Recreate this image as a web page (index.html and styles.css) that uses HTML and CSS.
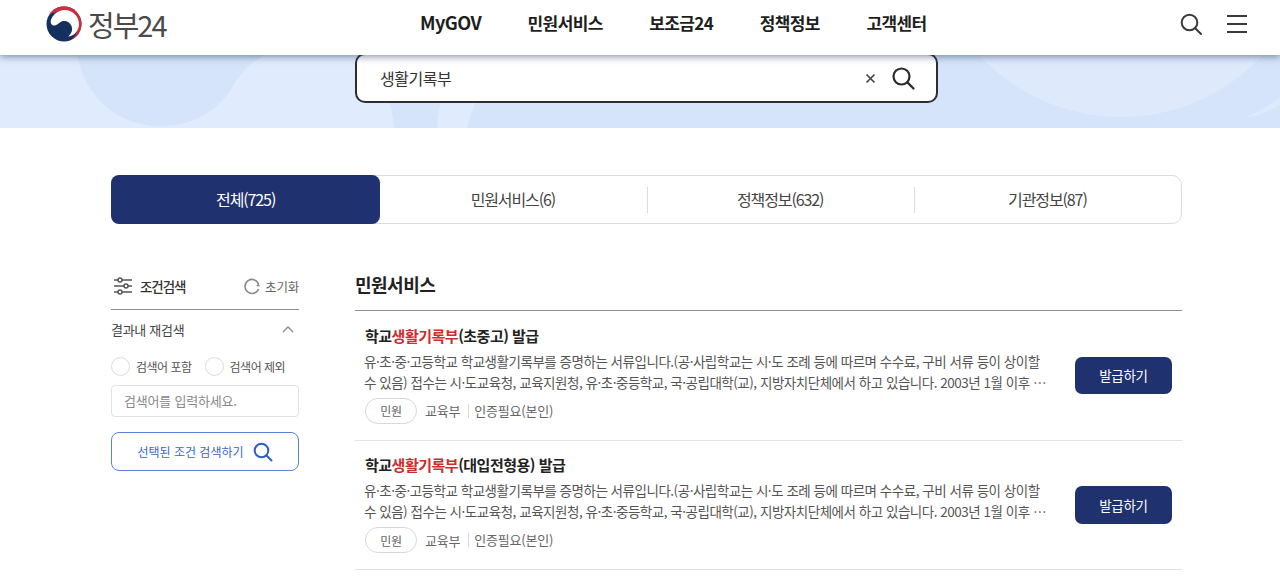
FILE: index.html
```html
<!DOCTYPE html>
<html lang="ko">
<head>
<meta charset="utf-8">
<title>정부24 검색</title>
<link rel="stylesheet" href="styles.css">
</head>
<body>
<header class="top">
  <a class="logo">
    <svg class="mark" width="36" height="36" viewBox="0 0 36 36">
      <circle cx="18" cy="18" r="17.500" fill="#14305f"/>
      <path d="M3.500 8C7 3 12 .5 18 .5 27.700.5 35.500 8.300 35.500 18c0 7-4 13-10 15.800 3.500-3.300 6.500-8.300 6.500-14.300C32 12 26 5 18.500 5 13 5 7.500 7.500 3.500 8z" fill="#c9303c"/>
      <path d="M4.700 15C6 9 12 4 18.500 4 27 4 33.200 11 33 18.500 32.800 25 27.500 30.500 22 30.500c3.500-2.500 5-6.700 3.500-10.500-1.500-3.800-6-6-10-4.500-2.500 1-3.500 3-6 3.700C7 20.300 4.200 18 4.700 15z" fill="#fff"/>
    </svg>
    <span class="logo-text">정부24</span>
  </a>
  <nav class="gnb">
    <a class="gnb-en">MyGOV</a>
    <a>민원서비스</a>
    <a>보조금24</a>
    <a>정책정보</a>
    <a>고객센터</a>
  </nav>
  <div class="top-tools">
    <svg width="24" height="24" viewBox="0 0 24 24" fill="none" stroke="#3a3a3a" stroke-width="2"><circle cx="10.500" cy="10.500" r="7.800"/><path d="M16.200 16.200L22 22" stroke-linecap="round"/></svg>
    <svg width="20" height="18" viewBox="0 0 20 18" fill="none" stroke="#3a3a3a" stroke-width="2"><path d="M0 1h20M0 9h20M0 17h20"/></svg>
  </div>
</header>

<section class="hero">
  <svg class="hero-bg" width="1280" height="73" viewBox="0 0 1280 73">
    <rect width="1280" height="73" fill="#e0ecfd"/>
    <path d="M77 0C85 40 115 71 160 71 195 71 218 55 232 33 240 18 252 6 265 0z" fill="#d5e4fa"/>
    <path d="M388 40C391 52 393 62 394 73H437C438 60 440 50 442 40z" fill="#d5e4fa"/>
    <path d="M480 40C474 50 470 60 467 73H1280V0H480z" fill="#d5e4fa"/>
    <circle cx="1121" cy="-131.600" r="193.600" fill="#deeafc"/>
    <path d="M1243 63C1258 58 1270 50 1280 42V50C1270 56 1255 62 1243 63z" fill="#deeafc"/>
  </svg>
  <div class="search">
    <span class="search-text">생활기록부</span>
    <svg class="search-clear" width="11" height="11" viewBox="0 0 11 11" fill="none" stroke="#444" stroke-width="1.700"><path d="M1.500 1.500l8 8M9.500 1.500l-8 8"/></svg>
    <svg width="24" height="24" viewBox="0 0 24 24" fill="none" stroke="#2b2b2b" stroke-width="2.200"><circle cx="10.500" cy="10.500" r="8"/><path d="M16.400 16.400L22.500 22.500" stroke-linecap="round"/></svg>
  </div>
</section>

<div class="wrap">
  <div class="tabs">
    <a class="tab on">전체(725)</a>
    <a class="tab">민원서비스(6)</a>
    <a class="tab line">정책정보(632)</a>
    <a class="tab line">기관정보(87)</a>
  </div>

  <div class="cols">
    <aside class="side">
      <div class="side-head">
        <svg width="20" height="20" viewBox="0 0 20 20" fill="none" stroke="#555" stroke-width="1.500"><path d="M1 4h18M1 10h18M1 16h18"/><circle cx="7" cy="4" r="2" fill="#fff"/><circle cx="13" cy="10" r="2" fill="#fff"/><circle cx="7" cy="16" r="2" fill="#fff"/></svg>
        <strong class="side-title">조건검색</strong>
        <span class="reset">
          <svg width="18" height="18" viewBox="0 0 18 18" fill="none" stroke="#8a8a8a" stroke-width="1.600"><path d="M15.700 7.500A7 7 0 1 0 15.500 12"/><path d="M17 9.500l-3.800-.4 2.300-2.800z" fill="#8a8a8a" stroke="none"/></svg>
          초기화
        </span>
      </div>
      <div class="side-sub">
        <span>결과내 재검색</span>
        <svg width="12" height="7" viewBox="0 0 12 7" fill="none" stroke="#888" stroke-width="1.400"><path d="M1 6l5-5 5 5"/></svg>
      </div>
      <div class="radios">
        <label class="radio"><i></i>검색어 포함</label>
        <label class="radio"><i></i>검색어 제외</label>
      </div>
      <div class="side-input">검색어를 입력하세요.</div>
      <button class="side-btn">선택된 조건 검색하기
        <svg width="20" height="20" viewBox="0 0 20 20" fill="none" stroke="#2f5fc4" stroke-width="2"><circle cx="8.500" cy="8.500" r="6.800"/><path d="M13.500 13.500L18.500 18.500" stroke-linecap="round"/></svg>
      </button>
    </aside>

    <main class="results">
      <h2 class="results-title">민원서비스</h2>
      <article class="item">
        <div class="item-body">
          <h3 class="item-title">학교<em>생활기록부</em>(초중고) 발급</h3>
          <p class="item-desc">유·초·중·고등학교 학교생활기록부를 증명하는 서류입니다.(공·사립학교는 시·도 조례 등에 따르며 수수료, 구비 서류 등이 상이할 수 있음) 접수는 시·도교육청, 교육지원청, 유·초·중등학교, 국·공립대학(교), 지방자치단체에서 하고 있습니다. 2003년 1월 이후 발급되는 학교생활기록부는 인터넷으로 신청할 수 있습니다.</p>
          <div class="item-meta"><span class="pill">민원</span><span>교육부</span><span class="sep">인증필요(본인)</span></div>
        </div>
        <a class="issue">발급하기</a>
      </article>
      <article class="item">
        <div class="item-body">
          <h3 class="item-title">학교<em>생활기록부</em>(대입전형용) 발급</h3>
          <p class="item-desc">유·초·중·고등학교 학교생활기록부를 증명하는 서류입니다.(공·사립학교는 시·도 조례 등에 따르며 수수료, 구비 서류 등이 상이할 수 있음) 접수는 시·도교육청, 교육지원청, 유·초·중등학교, 국·공립대학(교), 지방자치단체에서 하고 있습니다. 2003년 1월 이후 발급되는 학교생활기록부는 인터넷으로 신청할 수 있습니다.</p>
          <div class="item-meta"><span class="pill">민원</span><span>교육부</span><span class="sep">인증필요(본인)</span></div>
        </div>
        <a class="issue">발급하기</a>
      </article>
    </main>
  </div>
</div>
</body>
</html>
```

FILE: styles.css
```css
* { box-sizing: border-box; }
html, body { margin: 0; padding: 0; }
body {
  font-family: "Noto Sans CJK KR", "Noto Sans", sans-serif;
  color: #222;
  background: #fff;
  overflow: hidden;
  height: 577px;
}
.top {
  position: relative;
  z-index: 3;
  height: 55px;
  background: #fff;
  box-shadow: 0 2px 7px rgba(30, 50, 90, .5);
  display: flex;
  align-items: center;
  padding: 0 33px 8px 46px;
}
.logo { display: flex; align-items: center; gap: 6px; width: 374px; }
.logo-text { font-size: 29px; line-height: 36px; font-weight: 400; color: #4a4a4a; letter-spacing: -2px; }
.gnb { display: flex; gap: 46.500px; margin-bottom: 2px; font-size: 17px; font-weight: 700; color: #1e1e1e; letter-spacing: -.6px; }
.gnb-en { font-size: 18.200px; }
.gnb a { line-height: 25px; }
.top-tools { margin-left: auto; display: flex; align-items: center; gap: 24px; }

.hero {
  position: relative;
  height: 73px;
  background: #e0ecfd;
  overflow: hidden;
}
.hero-bg { position: absolute; left: 0; top: 0; }
.search {
  position: relative;
  z-index: 1;
  margin: -2px 0 0 355px;
  width: 583px;
  height: 50px;
  background: #fff;
  border: 2px solid #2e2e2e;
  border-radius: 10px;
  display: flex;
  align-items: center;
  padding: 0 21px 0 23px;
}
.search-text { font-size: 16px; color: #333; letter-spacing: -.5px; flex: 1; margin-top: -1px; }
.search-clear { margin-right: 15px; }

.wrap { width: 1071px; margin: 47px 0 0 111px; }
.tabs {
  display: grid;
  grid-template-columns: repeat(4, 1fr);
  height: 49px;
  border: 1px solid #dcdcdc;
  border-radius: 10px;
}
.tab {
  display: flex;
  align-items: center;
  justify-content: center;
  padding-bottom: 2px;
  font-size: 16px;
  color: #444;
  letter-spacing: -1.100px;
  position: relative;
}
.tab.on {
  margin: -1px -1px -1px -1px;
  background: #20316f;
  color: #fff;
  border-radius: 8px;
}
.tab.line::before {
  content: "";
  position: absolute;
  left: 0;
  top: 11px;
  height: 26px;
  border-left: 1px solid #dedede;
}

.cols { display: flex; gap: 56px; margin-top: 46px; }
.side { width: 188px; flex: none; }
.side-head {
  display: flex;
  align-items: center;
  height: 37px;
  border-bottom: 1px solid #8f8f8f;
  padding: 0 0 10px 2px;
  margin-top: 3px;
}
.side-title { font-size: 13.500px; font-weight: 500; color: #333; margin-left: 7px; letter-spacing: -1.100px; }
.reset { margin-left: auto; display: flex; align-items: center; gap: 4px; font-size: 12.500px; color: #666; letter-spacing: -.2px; }
.side-sub {
  display: flex;
  align-items: center;
  justify-content: space-between;
  font-size: 13px;
  color: #444;
  padding: 0 5px 0 0;
  height: 39px;
  letter-spacing: -.3px;
}
.radios { display: flex; gap: 13px; margin-top: 8px; }
.radio { display: flex; align-items: center; gap: 6px; font-size: 12px; color: #555; letter-spacing: -.5px; }
.radio i { width: 19px; height: 19px; border: 1px solid #ddd; border-radius: 50%; background: #fff; }
.side-input {
  height: 32px;
  margin-top: 9px;
  border: 1px solid #e2e2e2;
  border-radius: 4px;
  font-size: 13px;
  line-height: 30px;
  color: #888;
  padding-left: 12px;
  letter-spacing: -.2px;
}
.side-btn {
  display: flex;
  align-items: center;
  justify-content: center;
  gap: 9px;
  width: 188px;
  height: 39px;
  margin-top: 15px;
  background: #fff;
  border: 1px solid #5a82dc;
  border-radius: 8px;
  font: inherit;
  font-size: 12px;
  color: #3a66c6;
}

.results { flex: 1; }
.results-title {
  margin: 0;
  height: 41px;
  padding-top: 1px;
  font-size: 18px;
  line-height: 27px;
  font-weight: 700;
  color: #222;
  letter-spacing: -.5px;
  border-bottom: 1px solid #8f8f8f;
}
.item {
  display: flex;
  align-items: center;
  height: 129.500px;
  border-bottom: 1px solid #e3e3e3;
  padding: 0 10px;
}
.item-body { width: 686px; margin-right: 24px; padding-bottom: 2px; flex: none; }
.item-title { margin: 0; font-size: 15px; line-height: 22px; font-weight: 700; color: #222; letter-spacing: -.5px; }
.item-title em { font-style: normal; color: #cc2c2c; }
.item-desc {
  margin: 4px 0 0 -1px;
  font-size: 13.500px;
  line-height: 21px;
  color: #555;
  letter-spacing: -.48px;
  display: -webkit-box;
  -webkit-box-orient: vertical;
  -webkit-line-clamp: 2;
  overflow: hidden;
}
.item-meta { display: flex; align-items: center; margin-top: 5px; font-size: 13px; color: #666; letter-spacing: -.2px; }
.pill {
  display: flex;
  align-items: center;
  justify-content: center;
  width: 52px;
  height: 26px;
  border: 1px solid #d8d8d8;
  border-radius: 13px;
  font-size: 12px;
  margin-right: 8px;
}
.sep { margin-left: 8px; padding-left: 5px; border-left: 1px solid #d8d8d8; line-height: 14px; }
.issue {
  display: flex;
  align-items: center;
  justify-content: center;
  width: 97px;
  height: 37.500px;
  background: #20316f;
  color: #fff;
  border-radius: 7px;
  font-size: 13.500px;
  letter-spacing: -.3px;
}
```
